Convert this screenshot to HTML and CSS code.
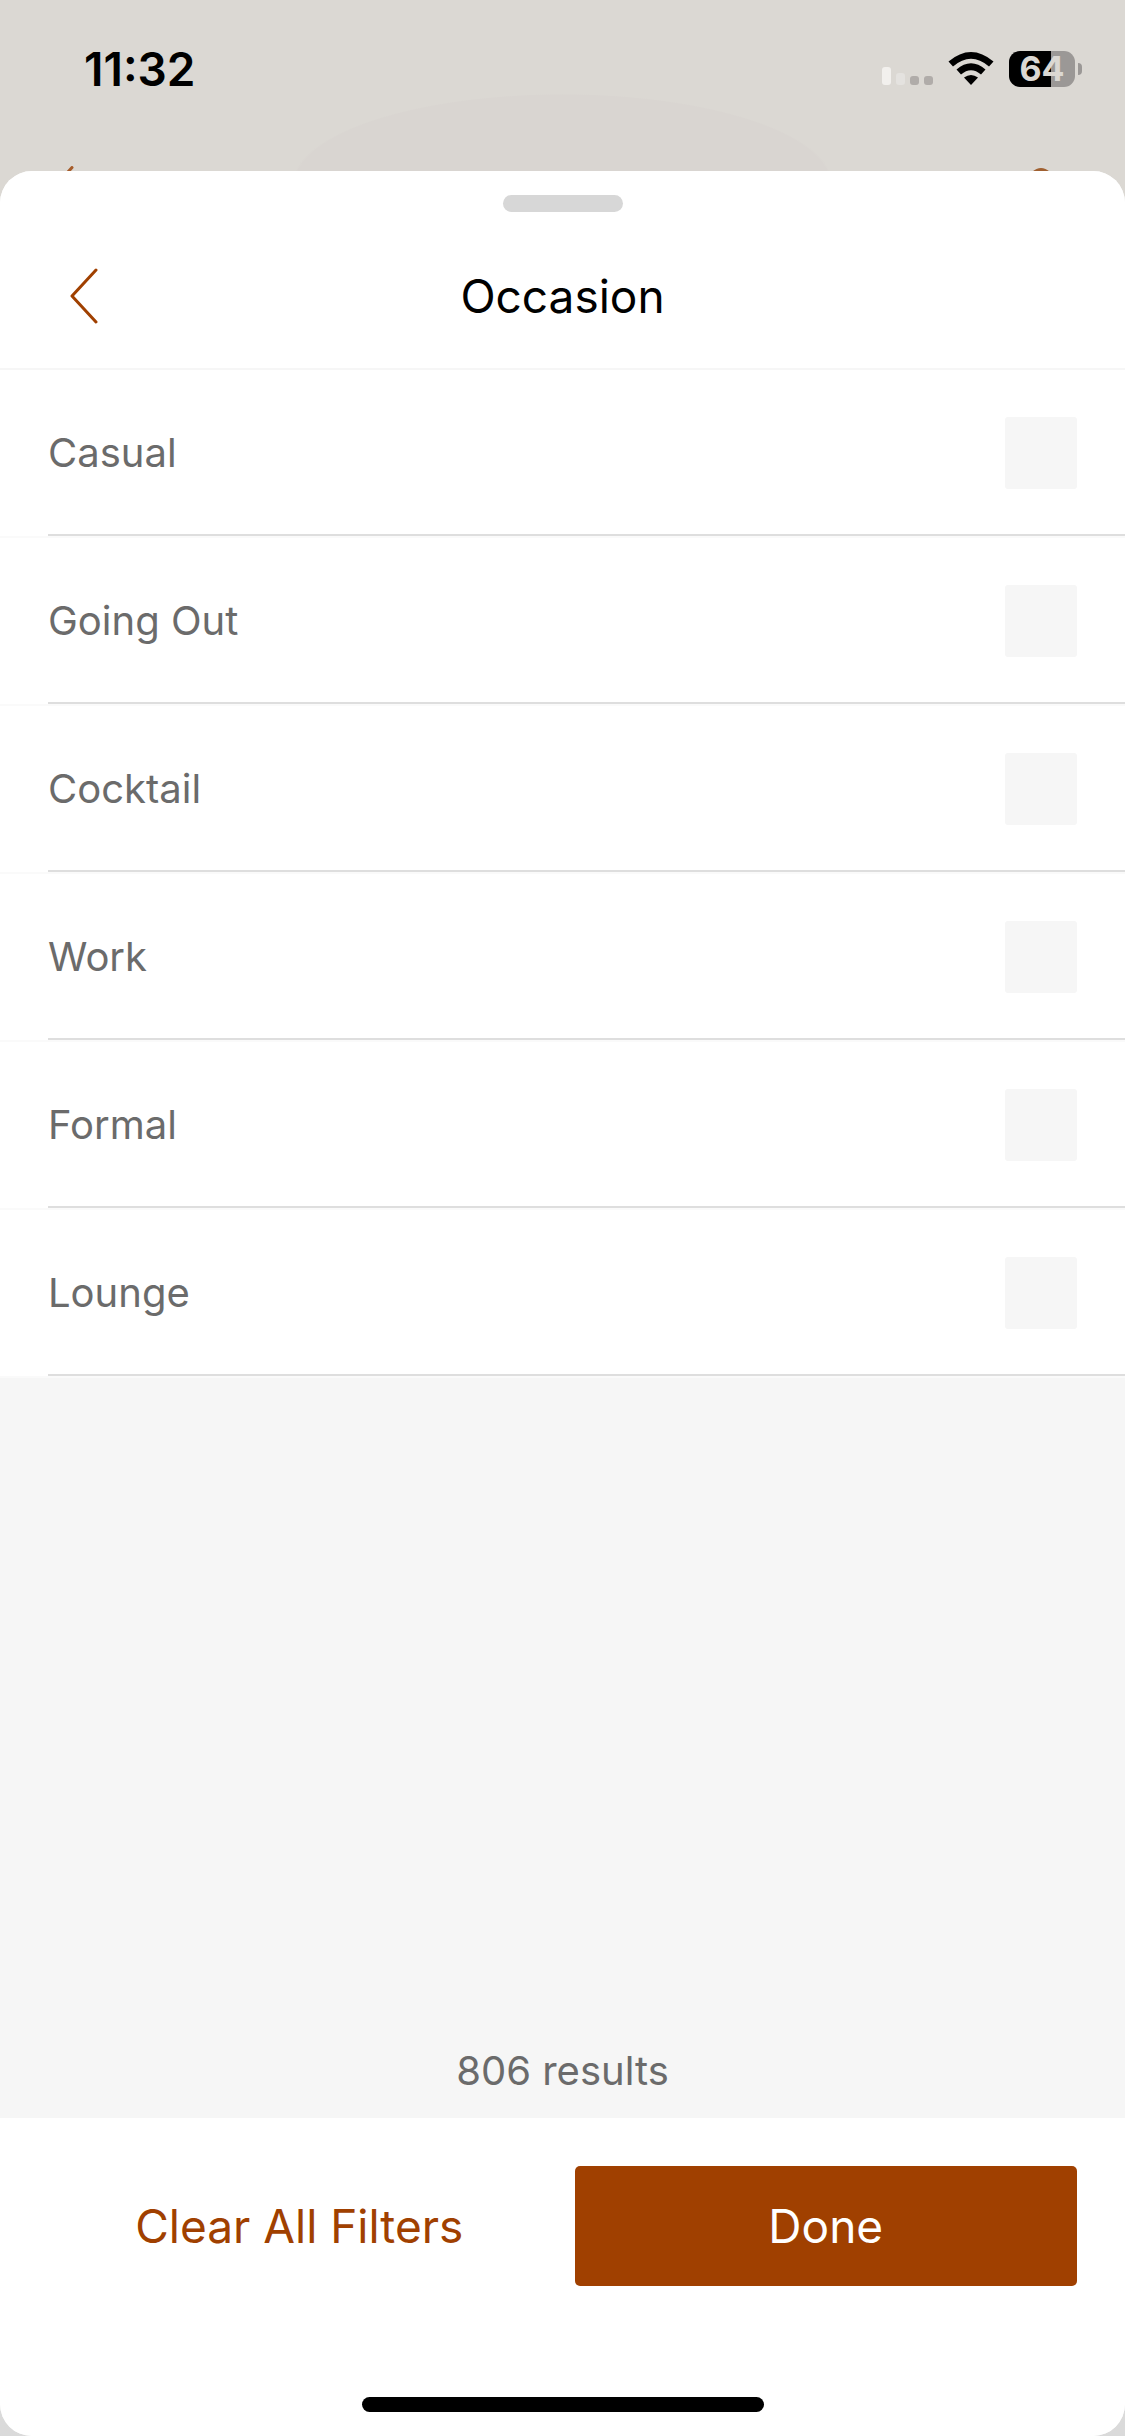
FILE: index.html
```html
<!DOCTYPE html>
<html lang="en">
<head>
  <meta charset="utf-8">
  <meta name="viewport" content="width=device-width, initial-scale=1">
  <title>Occasion</title>
  <link rel="stylesheet" href="styles.css">
</head>
<body>
  <div class="backdrop">
    <div class="status-bar">
      <span class="clock">11:32</span>
      <div class="status-icons">
        <svg class="signal" width="52" height="36" viewBox="0 0 52 36" aria-hidden="true">
          <rect x="1" y="16" width="9" height="18" rx="3" fill="#f2f0ed"/>
          <rect x="15" y="22" width="9" height="12" rx="3" fill="#e4e2df"/>
          <rect x="29" y="25" width="9" height="9" rx="3" fill="#b0aca9"/>
          <rect x="43" y="25" width="9" height="9" rx="3" fill="#b0aca9"/>
        </svg>
        <svg class="wifi" width="46" height="36" viewBox="0 0 46 36" aria-hidden="true">
          <path d="M0.500 10.500 Q23 -8.500 45.500 10.500 L41 15.500 Q23 0 5 15.500 Z"/>
          <path d="M8.500 18.500 Q23 6 37.500 18.500 L33 23.500 Q23 15 13 23.500 Z"/>
          <path d="M16 26.500 Q23 21.500 30 26.500 L23 34 Z"/>
        </svg>
        <div class="battery">
          <span class="battery-level">64</span>
          <span class="battery-cap"></span>
        </div>
      </div>
    </div>
    <svg class="peek-back" width="8" height="6" viewBox="0 0 8 6" aria-hidden="true"><path d="M1 6 L5 1.500" fill="none" stroke="#a65c2a" stroke-width="3" stroke-linecap="round"/></svg>
    <svg class="peek-search" width="18" height="6" viewBox="0 0 18 6" aria-hidden="true"><path d="M1 6 Q9 -1 17 6" fill="none" stroke="#a06030" stroke-width="3"/></svg>
  </div>

  <main class="sheet">
    <div class="handle"></div>
    <header class="sheet-header">
      <button class="back" type="button" aria-label="Back">
        <svg width="28" height="56" viewBox="0 0 28 56" aria-hidden="true"><path d="M26 2 L2 28 L26 54" fill="none" stroke="#a04000" stroke-width="3" stroke-linecap="round" stroke-linejoin="round"/></svg>
      </button>
      <h1 class="title">Occasion</h1>
    </header>

    <ul class="options">
      <li><label class="option"><span>Casual</span><input type="checkbox"></label></li>
      <li><label class="option"><span>Going Out</span><input type="checkbox"></label></li>
      <li><label class="option"><span>Cocktail</span><input type="checkbox"></label></li>
      <li><label class="option"><span>Work</span><input type="checkbox"></label></li>
      <li><label class="option"><span>Formal</span><input type="checkbox"></label></li>
      <li><label class="option"><span>Lounge</span><input type="checkbox"></label></li>
    </ul>

    <p class="results">806 results</p>

    <footer class="actions">
      <button class="button" type="button">Clear All Filters</button>
      <button class="button button-primary" type="button">Done</button>
    </footer>
    <div class="home-indicator"></div>
  </main>
</body>
</html>
```
FILE: styles.css
```css
* {
  box-sizing: border-box;
}

body {
  margin: 0;
  min-height: 100vh;
  display: flex;
  flex-direction: column;
  background: #dadada;
  font-family: Inter, "Liberation Sans", sans-serif;
  color: #000;
}

/* Dimmed screen behind the sheet; it runs on under the rounded corners */
.backdrop {
  position: relative;
  height: 211px;
  margin-bottom: -40px;
  background:
    radial-gradient(ellipse 270px 90px at 50% 184px, #d9d5d1 99%, transparent 100%),
    #dbd8d3;
}

.status-bar {
  display: flex;
  justify-content: space-between;
  padding: 40px 43px 0 84px;
}

.clock {
  font-size: 46px;
  line-height: 58px;
  font-weight: 600;
}

.status-icons {
  display: flex;
  align-items: center;
  gap: 15px;
  height: 58px;
}

.wifi {
  fill: #000;
}

.battery {
  display: flex;
  align-items: center;
  gap: 3px;
}

.battery-level {
  width: 66px;
  border-radius: 11px;
  background: linear-gradient(to right, #000 64%, #9b9896 64%);
  color: #dbd8d3;
  font-size: 34px;
  line-height: 36px;
  font-weight: 700;
  text-align: center;
}

.battery-cap {
  width: 4px;
  height: 12px;
  border-radius: 0 6px 6px 0;
  background: #9b9896;
}

.peek-back {
  position: absolute;
  left: 67px;
  top: 166px;
}

.peek-search {
  position: absolute;
  right: 75px;
  top: 167px;
}

.sheet {
  position: relative;
  flex: 1;
  display: flex;
  flex-direction: column;
  overflow: hidden;
  border-radius: 32px;
  background: #f6f6f6;
}

.handle {
  padding-top: 24px;
  background: #fff;
}

.handle::before {
  content: "";
  display: block;
  width: 120px;
  height: 17px;
  margin: 0 auto;
  border-radius: 9px;
  background: #d7d7d7;
}

.sheet-header {
  display: grid;
  grid-template-columns: 96px 1fr 96px;
  align-items: center;
  height: 158px;
  padding: 12px 22px 0;
  border-bottom: 2px solid #f6f6f6;
  background: #fff;
}

.back {
  display: flex;
  padding: 20px 20px 20px 48px;
  border: 0;
  background: none;
}

.title {
  margin: 0;
  font-size: 46px;
  line-height: 56px;
  font-weight: 400;
  text-align: center;
}

.options {
  margin: 0;
  padding: 0;
  list-style: none;
}

.options li {
  padding-left: 48px;
  border-bottom: 2px solid #fafafa;
  background: #fff;
}

.option {
  display: flex;
  align-items: center;
  justify-content: space-between;
  height: 166px;
  padding: 2px 48px 0 0;
  border-bottom: 2px solid #dedede;
  color: #6b6b6b;
  font-size: 40px;
  line-height: 48px;
}

.option input {
  appearance: none;
  width: 72px;
  height: 72px;
  margin: 0;
  border-radius: 3px;
  background: #f6f6f6;
}

.option input:checked {
  background: #a04000;
}

.results {
  margin: auto 0 0;
  padding-bottom: 23px;
  color: #6b6b6b;
  font-size: 40px;
  line-height: 48px;
  text-align: center;
}

.actions {
  display: grid;
  grid-template-columns: 1fr 1fr;
  gap: 24px;
  padding: 48px 48px 111px;
  background: #fff;
}

.button {
  height: 120px;
  padding: 0;
  border: 0;
  border-radius: 5px;
  background: none;
  color: #a04000;
  font-family: inherit;
  font-size: 46px;
}

.button-primary {
  background: #a04000;
  color: #fff;
}

.home-indicator {
  padding-bottom: 24px;
  background: #fff;
}

.home-indicator::before {
  content: "";
  display: block;
  width: 402px;
  height: 15px;
  margin: 0 auto;
  border-radius: 8px;
  background: #000;
}
```
